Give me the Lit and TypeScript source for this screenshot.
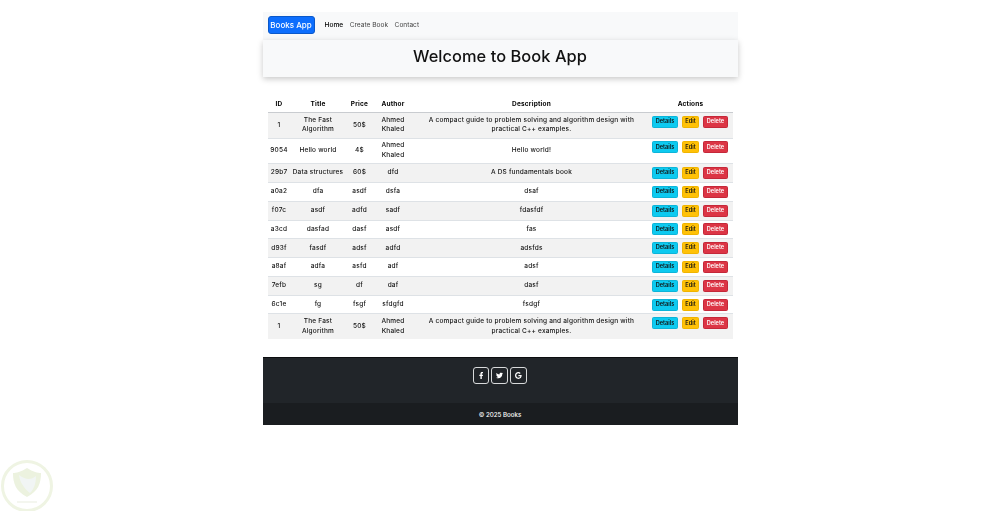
import { LitElement, html, css, svg } from "lit";
import { customElement } from "lit/decorators.js";

const LONG = "A compact guide to problem solving and algorithm design with practical C++ examples.";
const rows = [
  ["1", "The Fast Algorithm", "50$", "Ahmed Khaled", LONG],
  ["9054", "Hello world", "4$", "Ahmed Khaled", "Hello world!"],
  ["29b7", "Data structures", "60$", "dfd", "A DS fundamentals book"],
  ["a0a2", "dfa", "asdf", "dsfa", "dsaf"],
  ["f07c", "asdf", "adfd", "sadf", "fdasfdf"],
  ["a3cd", "dasfad", "dasf", "asdf", "fas"],
  ["d93f", "fasdf", "adsf", "adfd", "adsfds"],
  ["a8af", "adfa", "asfd", "adf", "adsf"],
  ["7efb", "sg", "df", "daf", "dasf"],
  ["6c1e", "fg", "fsgf", "sfdgfd", "fsdgf"],
  ["1", "The Fast Algorithm", "50$", "Ahmed Khaled", LONG],
];

const icons = [
  { w: 320, d: "M279.14 288l14.22-92.66h-88.91v-60.13c0-25.35 12.42-50.06 52.24-50.06h40.42V6.26S260.43 0 225.36 0c-73.22 0-121.08 44.38-121.08 124.72v70.62H22.89V288h81.39v224h100.17V288z" },
  { w: 512, d: "M459.37 151.716c.325 4.548.325 9.097.325 13.645 0 138.72-105.583 298.558-298.558 298.558-59.452 0-114.68-17.219-161.137-47.106 8.447.974 16.568 1.299 25.34 1.299 49.055 0 94.213-16.568 130.274-44.832-46.132-.975-84.792-31.188-98.112-72.772 6.498.974 12.995 1.624 19.818 1.624 9.421 0 18.843-1.3 27.614-3.573-48.081-9.747-84.143-51.98-84.143-102.985v-1.299c13.969 7.797 30.214 12.67 47.431 13.319-28.264-18.843-46.781-51.005-46.781-87.391 0-19.492 5.197-37.36 14.294-52.954 51.655 63.675 129.3 105.258 216.365 109.807-1.624-7.797-2.599-15.918-2.599-24.04 0-57.828 46.782-104.934 104.934-104.934 30.213 0 57.502 12.67 76.67 33.137 23.715-4.548 46.456-13.32 66.599-25.34-7.798 24.366-24.366 44.833-46.132 57.827 21.117-2.273 41.584-8.122 60.426-16.243-14.292 20.791-32.161 39.308-52.628 54.253z" },
  { w: 488, d: "M488 261.8C488 403.3 391.5 504 248 504 110.8 504 0 393.2 0 256S110.8 8 248 8c66.8 0 123 24.5 166.3 64.9l-67.5 64.9C258.5 52.6 94.3 116.6 94.3 256c0 86.5 69.1 156.6 153.7 156.6 98.2 0 135-70.4 140.8-106.9H248v-85.3h236.1c2.3 12.7 3.9 24.9 3.9 41.4z" },
];

@customElement("app-root")
export class AppRoot extends LitElement {
  static styles = css`
    :host {
      display: block;
      position: relative;
      height: 511px;
      overflow: hidden;
      background: #fff;
      font-family: Inter, "Liberation Sans", sans-serif;
      color: #111;
    }
    .page {
      width: 475px;
      margin: 0 auto;
      padding-top: 12px;
      filter: blur(0.25px);
    }
    .nav {
      display: flex;
      align-items: center;
      height: 28px;
      padding: 0 5px 3px;
      box-sizing: border-box;
      background: #f8f9fa;
      gap: 6.5px;
      font-size: 6.6px;
      color: #444;
    }
    .brand {
      display: flex;
      align-items: center;
      justify-content: center;
      width: 47px;
      height: 18px;
      box-sizing: border-box;
      margin-right: 3.5px;
      background: #0d6efd;
      border: 1px solid #0a58ca;
      border-radius: 3px;
      color: #fff;
      font-size: 8px;
      font-weight: 500;
    }
    .active { color: #000; font-weight: 500; }
    .hero {
      height: 37px;
      padding-bottom: 5px;
      box-sizing: border-box;
      display: flex;
      align-items: center;
      justify-content: center;
      background: #f8f9fa;
      box-shadow: 0 2px 6px rgba(0, 0, 0, 0.22);
      position: relative;
    }
    h1 {
      margin: 0;
      font-size: 16.4px;
      font-weight: 450;
      letter-spacing: 0.05px;
      color: #111;
    }
    .wrap { padding: 21px 5px 0; }
    table {
      width: 465px;
      table-layout: fixed;
      border-collapse: collapse;
      font-size: 6.5px;
      letter-spacing: 0.19px;
      line-height: 9.4px;
      text-align: center;
    }
    .c-id { width: 23px; }
    .c-title { width: 55px; }
    .c-price { width: 28px; }
    .c-author { width: 39px; }
    .c-desc { width: 238px; }
    .c-act { width: 82px; }
    th {
      height: 14.5px;
      padding: 0;
      font-weight: 700;
      color: #000;
      border-bottom: 1px solid #c9ccd0;
      box-sizing: border-box;
    }
    th:last-child { padding-right: 2px; }
    td {
      padding: 2.9px 0.5px;
      vertical-align: middle;
      border-bottom: 1px solid #dee2e6;
      color: #111;
      font-weight: 500;
    }
    td:nth-child(2), td:nth-child(4) { padding-left: 4px; padding-right: 4px; }
    td:nth-child(5) { padding-left: 14px; padding-right: 14px; }
    td.wide { padding-left: 0; padding-right: 0; }
    tr:last-child td { border-bottom: none; }
    tbody tr:nth-child(odd) td { background: #f2f2f2; }
    td.act { vertical-align: top; padding-left: 0; padding-right: 3px; }
    .btns { display: flex; justify-content: center; gap: 4px; }
    .btn {
      display: flex;
      align-items: center;
      justify-content: center;
      height: 12px;
      box-sizing: border-box;
      border-radius: 1.5px;
      font-size: 5.6px;
      font-weight: 600;
      letter-spacing: 0;
      line-height: 1;
    }
    .details { width: 26px; background: #0dcaf0; color: #111; border: 1px solid #0db4d8; }
    .edit { width: 17px; background: #ffc107; color: #111; border: 1px solid #f0b400; }
    .delete { width: 25px; background: #dc3545; color: #fff; border: 1px solid #c4283a; }
    footer {
      margin-top: 18px;
      height: 68px;
      display: flex;
      flex-direction: column;
      background: #212529;
      border-top: 1px solid #0c0e10;
      box-sizing: border-box;
      color: #fff;
    }
    .social {
      height: 45px;
      display: flex;
      justify-content: center;
      gap: 2px;
      padding-top: 9px;
      box-sizing: border-box;
    }
    .icon {
      width: 17px;
      height: 17px;
      box-sizing: border-box;
      display: flex;
      align-items: center;
      justify-content: center;
      border: 1px solid #d8dadb;
      border-radius: 3px;
    }
    .icon:first-child { width: 16px; }
    .icon svg { height: 7px; fill: #fff; display: block; }
    .copy {
      flex: 1;
      display: flex;
      align-items: center;
      justify-content: center;
      background: #1a1d20;
      font-size: 6.2px;
      font-weight: 500;
    }
    .mark {
      position: absolute;
      left: 1px;
      bottom: -1px;
      width: 52px;
      height: 52px;
    }
  `;

  render() {
    return html`
      <div class="page">
        <nav class="nav">
          <div class="brand">Books App</div>
          <span class="active">Home</span>
          <span>Create Book</span>
          <span>Contact</span>
        </nav>
        <header class="hero"><h1>Welcome to Book App</h1></header>
        <div class="wrap">
          <table>
            <colgroup>
              <col class="c-id" /><col class="c-title" /><col class="c-price" />
              <col class="c-author" /><col class="c-desc" /><col class="c-act" />
            </colgroup>
            <thead>
              <tr>
                <th>ID</th><th>Title</th><th>Price</th><th>Author</th><th>Description</th><th>Actions</th>
              </tr>
            </thead>
            <tbody>
              ${rows.map(
                (r) => html`<tr>
                  ${r.map((c, i) => html`<td class=${r[1] === "Data structures" && i === 1 ? "wide" : ""}>${c}</td>`)}
                  <td class="act">
                    <div class="btns">
                      <span class="btn details">Details</span>
                      <span class="btn edit">Edit</span>
                      <span class="btn delete">Delete</span>
                    </div>
                  </td>
                </tr>`
              )}
            </tbody>
          </table>
        </div>
        <footer>
          <div class="social">
            ${icons.map(
              (i) => html`<span class="icon">${svg`<svg viewBox="0 0 ${i.w} 512"><path d="${i.d}"></path></svg>`}</span>`
            )}
          </div>
          <div class="copy">© 2025 Books</div>
        </footer>
      </div>
      <svg class="mark" viewBox="0 0 52 52" fill="none">
        <circle cx="26" cy="26" r="24.5" stroke="#eff4e3" stroke-width="3"></circle>
        <path d="M26 8 C20 12 15 13 12 13 C12 24 15 31 26 37 C37 31 40 24 40 13 C37 13 32 12 26 8Z" fill="#ecf2df"></path>
        <path d="M18 15 C19 23 24 29 29 33 C33 29 35 23 35 16 C30 20 25 20 18 15Z" fill="#f1f5f4"></path>
        <path d="M16 42 h20" stroke="#f1f3ea" stroke-width="1.5"></path>
      </svg>
    `;
  }
}
